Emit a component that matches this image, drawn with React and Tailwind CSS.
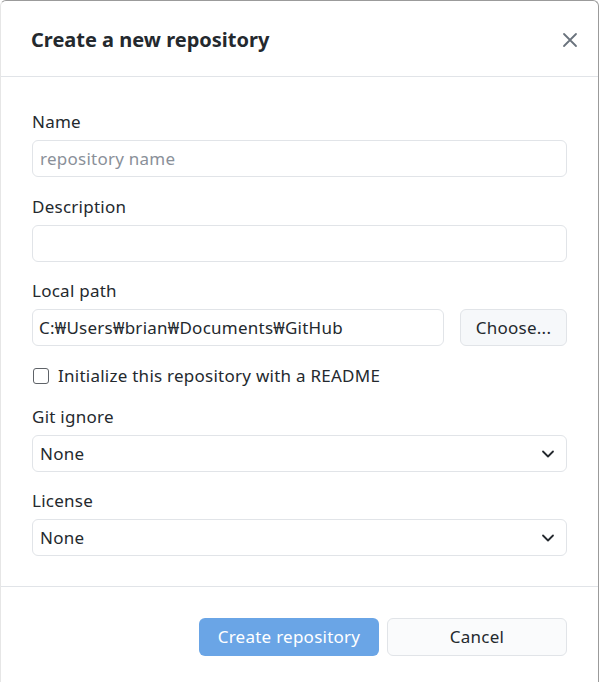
import React from "react";

function Chevron() {
  return (
    <svg width="14" height="14" viewBox="0 0 14 14" fill="none" className="text-[#24292e]">
      <path d="M2 4.5 L7 9.5 L12 4.5" stroke="currentColor" strokeWidth="1.8" strokeLinecap="round" strokeLinejoin="round" />
    </svg>
  );
}

function Field({ label, children, className = "" }) {
  return (
    <div className={className}>
      <div className="h-6 leading-6 text-[#24292e]">{label}</div>
      <div className="mt-[6px]">{children}</div>
    </div>
  );
}

function Select({ value }) {
  return (
    <div className="flex h-[37px] items-center justify-between rounded-md border border-[#e1e4e8] bg-white pl-[7px] pr-[11px] text-[#24292e]">
      <span>{value}</span>
      <Chevron />
    </div>
  );
}

export default function App() {
  return (
    <div
      className="h-[682px] w-[600px] overflow-hidden bg-white text-[17px] tracking-[0.25px]"
      style={{ fontFamily: '"Noto Sans", "Noto Sans CJK KR", sans-serif' }}
    >
      <div className="h-[700px] w-[599px] rounded-t-[6px] border-t border-r border-l border-[#9b9b9b] border-l-[#e6e6e6] bg-white">
        <div className="flex h-[76px] items-center justify-between border-b border-[#e1e4e8] pl-[30px] pr-[20px] pt-[3px]">
          <h1 className="text-[20px] font-bold tracking-normal text-[#24292e]">Create a new repository</h1>
          <svg width="16" height="16" viewBox="0 0 16 16" className="text-[#6a737d]">
            <path d="M2 2 L14 14 M14 2 L2 14" stroke="currentColor" strokeWidth="1.8" strokeLinecap="round" />
          </svg>
        </div>

        <div className="px-[31px] pt-[33px]">
          <Field label="Name">
            <div className="flex h-[37px] items-center rounded-md border border-[#e1e4e8] px-[7px] text-[#8a9099]">
              repository name
            </div>
          </Field>

          <Field label="Description" className="mt-[18px]">
            <div className="h-[37px] rounded-md border border-[#e1e4e8]" />
          </Field>

          <Field label="Local path" className="mt-[17px]">
            <div className="flex gap-[16px]">
              <div className="flex h-[37px] flex-1 items-center rounded-md border border-[#e1e4e8] px-[6px] text-[#24292e]">
                C:₩Users₩brian₩Documents₩GitHub
              </div>
              <button className="h-[37px] w-[107px] rounded-md border border-[#e1e4e8] bg-[#f6f8fa] text-[#24292e]">
                Choose...
              </button>
            </div>
          </Field>

          <label className="mt-[18px] flex h-6 items-center gap-[9px] text-[#24292e]">
            <span className="ml-px h-[16px] w-[16px] rounded-[3px] border border-[#5f6368] bg-white" />
            Initialize this repository with a README
          </label>

          <Field label="Git ignore" className="mt-[17px]">
            <Select value="None" />
          </Field>

          <Field label="License" className="mt-[17px]">
            <Select value="None" />
          </Field>
        </div>

        <div className="mt-[30px] flex justify-end gap-[8px] border-t border-[#e1e4e8] pt-[31px] pr-[31px]">
          <button className="h-[38px] w-[180px] rounded-md bg-[#6aa5e6] text-white">
            Create repository
          </button>
          <button className="h-[38px] w-[180px] rounded-md border border-[#e1e4e8] bg-[#fafbfc] text-[#24292e]">
            Cancel
          </button>
        </div>
      </div>
    </div>
  );
}
